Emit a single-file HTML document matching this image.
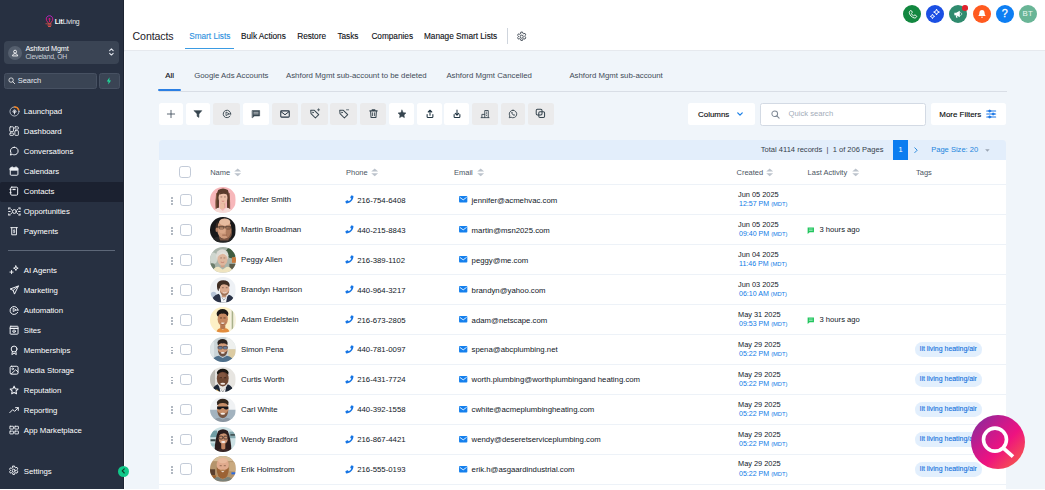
<!DOCTYPE html>
<html lang="en">
<head>
<meta charset="utf-8">
<title>Contacts</title>
<style>
*{box-sizing:border-box;margin:0;padding:0}
html,body{width:1045px;height:490px;overflow:hidden;background:#fff}
body{font-family:"Liberation Sans",Arial,sans-serif;color:#1f2733;position:relative;font-size:8px}
svg{display:block;overflow:visible}
.abs{position:absolute}
/* ---------- sidebar ---------- */
#side{position:absolute;left:0;top:0;width:123.700px;height:488.600px;background:#273041;color:#fff}
#logo{position:absolute;left:0;top:14px;width:124px;height:16px}
#logo .t{position:absolute;left:54.800px;top:3.700px;font-size:6.800px;letter-spacing:-.16px;color:#e9ecf2;white-space:nowrap}
#logo .t b{font-weight:700;color:#fff}
#acct{position:absolute;left:4.2px;top:41px;width:115px;height:23px;border-radius:4px;background:#3a4454}
#acct .av{position:absolute;left:4px;top:4.5px;width:14.2px;height:14.2px;border-radius:50%;background:#555f6e}
#acct .n1{position:absolute;left:21.2px;top:3.2px;font-size:7.3px;letter-spacing:-.19px;color:#fff;white-space:nowrap}
#acct .n2{position:absolute;left:21.2px;top:12.2px;font-size:6.8px;letter-spacing:-.2px;color:#c8ced8;white-space:nowrap}
#srch{position:absolute;left:4.2px;top:73px;width:93.2px;height:15.6px;border-radius:2.5px;background:#3a4454;border:.5px solid #475162}
#srch span{position:absolute;left:12.500px;top:2px;font-size:7.500px;letter-spacing:-.05px;color:#e3e7ee}
#bolt{position:absolute;left:98.5px;top:73px;width:21.200px;height:15.6px;border-radius:2.5px;background:#3a4454;border:.5px solid #475162}
.nav{position:absolute;left:0;width:123.7px;height:20px}
.nav.sel{background:#1b2130;border-radius:2px 0 0 2px;top:182.200px!important;height:19.400px}
.nav.sel span{top:5.050px}.nav.sel svg{top:4.150px}
.nav span{position:absolute;left:23.800px;top:5.250px;font-size:7.800px;color:#fff;white-space:nowrap;letter-spacing:-.03px}
.nav svg{position:absolute;left:9px;top:4.350px;width:10.200px;height:10.200px;fill:none;stroke:#f2f4f8;stroke-width:1.550;stroke-linecap:round;stroke-linejoin:round}
#sdiv{position:absolute;left:8px;top:249.6px;width:107px;height:1.2px;background:#5d6778}
#collapse{z-index:5;position:absolute;left:117.900px;top:466px;width:11.200px;height:11.200px;border-radius:50%;background:#10c98a}
/* ---------- header ---------- */
#hdr{position:absolute;left:123.7px;top:0;width:922px;height:50.6px;background:#fff;border-bottom:1px solid #e6e9ee}
#title{position:absolute;left:132.6px;top:29.6px;font-size:10.6px;color:#1b2029;letter-spacing:-.12px;white-space:nowrap}
.tab{position:absolute;top:32.300px;font-size:8.270px;letter-spacing:-.02px;color:#0c0f14;-webkit-text-stroke:.1px #0c0f14;white-space:nowrap}
.tab.on{color:#2b8fe0;-webkit-text-stroke:.1px #2b8fe0}
#tabline{position:absolute;left:185.300px;top:47.800px;width:48.600px;height:1.600px;background:#3a9be3}
#vsep{position:absolute;left:506.800px;top:28px;width:1px;height:16px;background:#cfd5dd}
.circ{position:absolute;top:5.050px;width:18.4px;height:18.4px;border-radius:50%}
.circ svg{position:absolute;left:4.2px;top:4.2px;width:10px;height:10px}
/* ---------- body ---------- */
#main{position:absolute;left:123.7px;top:51.4px;width:922px;height:437.2px;background:#f0f5fa}
.stab{position:absolute;top:70.800px;font-size:7.820px;color:#414b57;white-space:nowrap}
#sline{position:absolute;left:159px;top:90.8px;width:848px;height:.9px;background:#d9dee6}
#sall{position:absolute;left:158.300px;top:88.900px;width:22.800px;height:2.200px;background:#2b7fe3;border-radius:1px}
.tb{position:absolute;top:103px;height:21.8px;border-radius:2.5px;background:#fff}
.tb.d{background:#ebebec}
.tb svg{position:absolute;left:50%;top:50%;width:10px;height:10px;margin:-5px 0 0 -5px;fill:none;stroke:#36454f;stroke-width:1.8;stroke-linecap:round;stroke-linejoin:round}
#cols{position:absolute;left:687.6px;top:102.8px;width:67.6px;height:22.6px;border-radius:2.5px;background:#fff}
#cols span{position:absolute;left:10.400px;top:7.500px;font-size:7.950px;color:#05070a;-webkit-text-stroke:.12px #05070a}
#qs{position:absolute;left:760.400px;top:102.800px;width:165.600px;height:23.100px;border-radius:2.5px;background:#fff;border:.8px solid #d3dae4}
#qs span{position:absolute;left:27.200px;top:5.700px;font-size:7.650px;color:#a3acb9}
#mf{position:absolute;left:931.100px;top:102.8px;width:75px;height:22.6px;border-radius:2.5px;background:#fff}
#mf span{position:absolute;left:8.200px;top:7.300px;font-size:7.950px;color:#05070a;-webkit-text-stroke:.12px #05070a;white-space:nowrap}
/* ---------- pager ---------- */
#pg{position:absolute;left:159px;top:139.6px;width:847.4px;height:20.8px;background:#e3eefb;border-radius:3.5px 3.5px 0 0}
#pg .txt{position:absolute;left:601.800px;top:5.700px;font-size:7.550px;color:#353f4c;white-space:nowrap}
#pg .one{position:absolute;left:733.900px;top:0;width:15.200px;height:20.8px;background:#0c7df0;color:#fff;font-size:7.4px;text-align:center;line-height:20.8px}
#pg .ps{position:absolute;left:772.200px;top:5.700px;font-size:7.550px;color:#2386dd;white-space:nowrap}
/* ---------- table ---------- */
#tbl{position:absolute;left:159px;top:160.4px;width:847.4px;height:328.2px;background:#fff;overflow:hidden}
.th{position:absolute;top:7.600px;font-size:7.500px;color:#4b5563;white-space:nowrap}
.row{position:absolute;left:0;width:847.400px;height:30px;border-top:1px solid #edf2f8}
.row .dots{position:absolute;left:12.300px;top:11.600px;width:2.400px;height:9px}
.row .dots i{position:absolute;left:0;width:1.800px;height:1.800px;border-radius:50%;background:#9aa3af}
.cb{position:absolute;left:21.100px;width:11.600px;height:11.600px;border:.9px solid #c3cbd8;border-radius:2.800px;background:#fff}
.row .cb{top:8.700px}
.row.last>*{margin-top:-.5px}
.row.u4>*{margin-top:-.4px}.row.u5>*{margin-top:-.55px}
.row.last>.d1,.row.last>.d2,.row.last>.tag,.row.u4>.d1,.row.u4>.d2,.row.u4>.tag,.row.u5>.d1,.row.u5>.d2,.row.u5>.tag{margin-top:0}
.av{position:absolute;left:51.300px;top:1.850px;width:25.500px;height:25.500px;border-radius:50%;overflow:hidden}
.nm{position:absolute;left:82px;top:10px;font-size:7.850px;color:#111827;white-space:nowrap}
.ph{position:absolute;left:198.200px;top:10.150px;font-size:7.780px;color:#111827;white-space:nowrap}
.em{position:absolute;left:312.600px;top:10.150px;font-size:7.780px;color:#111827;white-space:nowrap}
.d1{position:absolute;left:579px;top:4.400px;font-size:7.380px;color:#111827;white-space:nowrap}
.d2{position:absolute;left:580px;top:15px;font-size:7.050px;color:#0e7ae6;white-space:nowrap}
.d2 small{font-size:5.750px}
.la{position:absolute;left:660.500px;top:9.700px;font-size:7.650px;color:#111827;white-space:nowrap}
.tag{position:absolute;left:756.200px;top:7px;width:66.4px;height:14.6px;border-radius:7.3px;background:#e2effd;color:#0f70dc;-webkit-text-stroke:.1px #0f70dc;font-size:6.950px;text-align:center;line-height:14.600px;white-space:nowrap}
.pico{position:absolute;left:186.200px;top:10.100px;width:8.600px;height:8.600px}
.eico{position:absolute;left:299.800px;top:11.100px;width:8.4px;height:6.4px}
.mico{position:absolute;left:647.800px;top:11.200px;width:7.6px;height:7.2px}
#fab{position:absolute;left:971px;top:415px;width:54px;height:54px;border-radius:50%;background:linear-gradient(135deg,#8b2a9c 8%,#c71a8d 35%,#ee1280 58%,#f4445a 82%,#f9603f 100%)}
</style>
</head>
<body>
<!-- SIDEBAR -->
<div id="side">
  <div id="logo">
    <svg class="abs" style="left:45.4px;top:.6px;width:9px;height:13px" viewBox="0 0 18 26">
      <defs><linearGradient id="lg" x1="0" y1="0" x2="0" y2="1"><stop offset="0" stop-color="#c026d3"/><stop offset=".6" stop-color="#ec1181"/><stop offset="1" stop-color="#f9603f"/></linearGradient></defs>
      <path d="M9 1.5c4 0 6.5 3 6.5 6.6 0 2.600-1.400 4.300-2.700 5.800-.9 1-1.300 2.200-1.300 3.600h-5c0-1.400-.4-2.600-1.300-3.600C3.900 12.400 2.500 10.700 2.500 8.100 2.500 4.500 5 1.500 9 1.500z" fill="none" stroke="url(#lg)" stroke-width="1.8"/>
      <path d="M9 6.200v8M6.600 9l2.400-2.800L11.400 9" fill="none" stroke="#ec1181" stroke-width="1.500"/>
      <path d="M5.500 20h7M7 23h4" stroke="#f5524b" stroke-width="1.800" stroke-linecap="round"/>
      <path d="M1 17.500h4" stroke="#f5524b" stroke-width="1.400"/>
    </svg>
    <div class="t"><b>Lit</b>Living</div>
  </div>
  <div id="acct">
    <div class="av"><svg viewBox="0 0 12 12" style="width:14.2px;height:14.2px"><circle cx="6" cy="4.800" r="1.250" fill="none" stroke="#fff" stroke-width=".75"/><path d="M3.800 8.400c.2-1.300 1-1.900 2.200-1.900s2 .6 2.200 1.900z" fill="none" stroke="#fff" stroke-width=".75" stroke-linejoin="round"/></svg></div>
    <div class="n1">Ashford Mgmt</div>
    <div class="n2">Cleveland, OH</div>
    <svg class="abs" style="left:105.200px;top:6.100px;width:4.800px;height:10px" viewBox="0 0 6 12"><path d="M.8 4.200L3 2l2.200 2.200M.8 7.600L3 9.800l2.200-2.200" fill="none" stroke="#e3e7ee" stroke-width="1.350" stroke-linecap="round" stroke-linejoin="round"/></svg>
  </div>
  <div id="srch">
    <svg class="abs" style="left:2.600px;top:2.700px;width:7.400px;height:7.400px" viewBox="0 0 10 10"><circle cx="4.200" cy="4.200" r="3" fill="none" stroke="#fff" stroke-width="1"/><path d="M6.500 6.500L9 9" stroke="#fff" stroke-width="1.100" stroke-linecap="round"/></svg>
    <span>Search</span>
  </div>
  <div id="bolt"><svg class="abs" style="left:6.400px;top:3.200px;width:5.800px;height:7.800px" viewBox="0 0 8 11"><path d="M5 .5L1 6.200h2.600L3 10.500l4-5.700H4.400z" fill="#1fdc9b"/></svg></div>

  <div class="nav" style="top:102px"><svg viewBox="0 0 16 16" style="left:8.600px;top:3.900px;width:11px;height:11px"><circle cx="8" cy="8" r="6.600" stroke="#c5ccd6" stroke-width="1.200"/><path d="M8 1.400a6.600 6.600 0 0 1 6.200 4.300" stroke="#f5821f" stroke-width="1.900"/><path d="M8 11.500V7M5.700 8.300c0-1.500 1-2.600 2.300-2.600s2.300 1.100 2.300 2.600z" stroke-width="1.300"/></svg><span>Launchpad</span></div>
  <div class="nav" style="top:122px"><svg viewBox="0 0 16 16"><g stroke-width="1.350"><rect x="1.300" y="1.300" width="5.700" height="7.400" rx=".8"/><rect x="9.200" y="1.300" width="5.500" height="3.600" rx=".8"/><rect x="1.300" y="11" width="5.700" height="3.700" rx=".8"/><rect x="9.200" y="7.300" width="5.500" height="7.400" rx=".8"/></g></svg><span>Dashboard</span></div>
  <div class="nav" style="top:142px"><svg viewBox="0 0 16 16"><path d="M8.300 2C4.800 2 2.300 4.500 2.300 7.700c0 1.300.4 2.400 1 3.300L2 14.200l3.500-1c.8.400 1.800.6 2.800.6 3.500 0 6-2.500 6-5.900C14.300 4.500 11.800 2 8.300 2z"/></svg><span>Conversations</span></div>
  <div class="nav" style="top:162px"><svg viewBox="0 0 16 16"><rect x="2" y="3" width="12" height="11.500" rx="1.500"/><path d="M2.300 3.300h11.400v3.200H2.300z" fill="#f1f4f8"/><path d="M5 1.300v2M11 1.300v2"/></svg><span>Calendars</span></div>
  <div class="nav sel" style="top:182px"><svg viewBox="0 0 16 16"><rect x="2.600" y="1.800" width="11" height="12.600" rx="1.800"/><path d="M5.400 5.400h5" stroke-width="2.100" stroke-linecap="butt"/><path d="M1.400 5.200h1.800M1.400 10.500h1.800" stroke-width="1.400"/></svg><span>Contacts</span></div>
  <div class="nav" style="top:202px"><svg viewBox="0 0 20 14" style="left:8.400px;top:5.400px;width:12.800px;height:9px"><circle cx="10" cy="7" r="3" stroke-width="1.500"/><path d="M1.200 1.600h2.200M1.200 1.600v1.800M18.800 1.600h-2.200M18.800 1.600v1.800M1.200 12.400h2.200M1.200 12.400v-1.800M18.800 12.400h-2.200M18.800 12.400v-1.800M4.400 3.400l1.800 1.400M15.600 3.400l-1.800 1.400M4.400 10.600l1.800-1.400M15.600 10.600l-1.800-1.400M1 7h2.400M16.600 7H19" stroke-width="1.500"/></svg><span>Opportunities</span></div>
  <div class="nav" style="top:222px"><svg viewBox="0 0 16 16"><path d="M4.300 2.800v11h7.400v-11M2.800 2.600h10.400" stroke-width="1.500"/><path d="M8 5.600v5.400M9.300 6.900c-.5-.6-2.500-.6-2.500.5 0 1.300 2.600.6 2.600 1.900 0 1.100-2.200 1.100-2.800.4" stroke-width="1"/></svg><span>Payments</span></div>
  <div id="sdiv"></div>
  <div class="nav" style="top:260.8px"><svg viewBox="0 0 16 16"><path d="M10.800 1.400l1 2.600 2.600 1-2.600 1-1 2.600-1-2.600-2.600-1 2.600-1z" stroke-width="1.500"/><path d="M4 8.600v5M1.500 11.100h5" stroke-width="1.500"/></svg><span>AI Agents</span></div>
  <div class="nav" style="top:280.8px"><svg viewBox="0 0 16 16"><path d="M14.300 1.700L1.800 6.300l4.800 2.200 1.800 5.200z"/><path d="M14.300 1.700L6.600 8.500" stroke-width="1.400"/></svg><span>Marketing</span></div>
  <div class="nav" style="top:300.8px"><svg viewBox="0 0 16 16"><path d="M13.600 11.600A6.300 6.300 0 1 1 14.300 8" /><path d="M6.600 5.600v4.800l4-2.400z" stroke-width="1.400"/><path d="M10.600 8h3.700" stroke-width="1.400"/></svg><span>Automation</span></div>
  <div class="nav" style="top:320.8px"><svg viewBox="0 0 16 16"><rect x="1.800" y="2" width="12.400" height="12.400" rx="1"/><path d="M2 5.200h12" stroke-width="1.800"/><circle cx="8" cy="9.800" r="2.100" stroke-width="1.200"/><path d="M5.900 9.800h4.200" stroke-width="1"/></svg><span>Sites</span></div>
  <div class="nav" style="top:340.8px"><svg viewBox="0 0 16 16"><circle cx="8" cy="6.300" r="4.600"/><path d="M5.300 10.200L4.500 15 8 13l3.500 2-.8-4.800"/></svg><span>Memberships</span></div>
  <div class="nav" style="top:360.8px"><svg viewBox="0 0 16 16"><rect x="1.800" y="2" width="12.400" height="12.400" rx="2"/><circle cx="5.800" cy="6" r="1.300" stroke-width="1.300"/><path d="M3.500 14l7-6.500 3.700 3.500" stroke-width="1.500"/></svg><span>Media Storage</span></div>
  <div class="nav" style="top:380.8px"><svg viewBox="0 0 16 16"><path d="M8 1.800l1.900 4 4.300.6-3.100 3 .7 4.300L8 11.700l-3.800 2 .7-4.300-3.100-3 4.300-.6z" stroke-width="1.600"/></svg><span>Reputation</span></div>
  <div class="nav" style="top:400.8px"><svg viewBox="0 0 16 16"><path d="M1.200 12l4.800-4.800 2.800 2.800 5.700-5.700M10.300 4.200h4.300v4.300"/></svg><span>Reporting</span></div>
  <div class="nav" style="top:420.8px"><svg viewBox="0 0 16 16"><g stroke-linejoin="miter" stroke-width="1.400"><rect x="1.400" y="2" width="5.600" height="4.400" rx=".5"/><rect x="9.200" y="2" width="5.600" height="4.400" rx=".5"/><rect x="1.400" y="9.600" width="5.600" height="4.400" rx=".5"/><rect x="9.200" y="9.600" width="5.600" height="4.400" rx=".5"/></g></svg><span>App Marketplace</span></div>
  <div class="nav" style="top:461.700px"><svg viewBox="0 0 16 16" style="left:8.400px;top:3.800px;width:11.400px;height:11.400px"><circle cx="8" cy="8" r="2.100" stroke-width="1.400"/><path d="M6.800 1.500h2.400l.4 1.700 1.300.7 1.700-.6 1.200 2.100-1.300 1.200v1.500l1.300 1.200-1.200 2.100-1.700-.6-1.300.7-.4 1.700H6.800l-.4-1.700-1.300-.7-1.700.6-1.200-2.100 1.300-1.200V7.300L2.200 6.100l1.200-2.100 1.700.6 1.300-.7z" stroke-width="1.400"/></svg><span>Settings</span></div>
</div>
<div class="abs" style="left:122.700px;top:0;width:1px;height:488.600px;background:#1d2432;z-index:3"></div><div class="abs" style="left:123.700px;top:51.600px;width:1px;height:437px;background:#fbfcfe;z-index:3"></div>
<div id="collapse"><svg class="abs" style="left:2.800px;top:2.400px;width:4.400px;height:5.800px" viewBox="0 0 5 7"><path d="M3.800 1L1.300 3.500 3.800 6" fill="none" stroke="#0f3d2a" stroke-width="1.400" stroke-linecap="round" stroke-linejoin="round"/></svg></div>

<!-- HEADER -->
<div id="hdr"></div>
<div id="title">Contacts</div>
<div class="tab on" style="left:189.200px">Smart Lists</div>
<div class="tab" style="left:241px">Bulk Actions</div>
<div class="tab" style="left:297.200px">Restore</div>
<div class="tab" style="left:337.400px">Tasks</div>
<div class="tab" style="left:371.400px">Companies</div>
<div class="tab" style="left:424px">Manage Smart Lists</div>
<div id="tabline"></div>
<div id="vsep"></div>
<svg class="abs" style="left:516.400px;top:30.500px;width:11.400px;height:11.400px" viewBox="0 0 16 16" fill="none" stroke="#3f4853" stroke-width="1.300" stroke-linejoin="round"><circle cx="8" cy="8" r="2.200"/><path d="M6.800 1.500h2.400l.4 1.700 1.300.7 1.700-.6 1.200 2.100-1.300 1.200v1.500l1.300 1.200-1.200 2.100-1.700-.6-1.300.7-.4 1.700H6.800l-.4-1.700-1.300-.7-1.700.6-1.200-2.100 1.300-1.200V7.300L2.200 6.100l1.200-2.100 1.700.6 1.300-.7z"/></svg>

<div class="circ" style="left:902.900px;background:#12873f"><svg viewBox="0 0 12 12" style="left:3.700px;top:3.700px;width:11px;height:11px"><path d="M3.600 1.800c.5-.4 1.200-.2 1.500.4l.5 1c.2.500.1 1-.3 1.300l-.5.500c.4 1.100 1.300 2 2.400 2.500l.5-.5c.3-.4.900-.5 1.300-.3l1 .5c.6.300.8 1 .4 1.500-.6.900-1.700 1.300-2.700 1C5.300 9 3.300 7 2.600 4.600c-.3-1 .1-2.100 1-2.800z" fill="none" stroke="#fff" stroke-width="1"/></svg></div>
<div class="circ" style="left:925.600px;background:#1b4fe3"><svg viewBox="0 0 12 12" style="left:3.400px;top:3.400px;width:11.600px;height:11.600px"><path d="M7.800 1.200l.9 2.100 2.100.9-2.100.9-.9 2.100-.9-2.100-2.100-.9 2.100-.9z" fill="none" stroke="#fff" stroke-width="1" stroke-linejoin="round"/><path d="M3.600 6.400l.7 1.600 1.600.7-1.600.7-.7 1.600-.7-1.600L1.300 8.700l1.600-.7z" fill="none" stroke="#fff" stroke-width=".9" stroke-linejoin="round"/></svg></div>
<div class="circ" style="left:948.700px;background:#2f8b6e"><svg viewBox="0 0 12 12"><path d="M1.600 4.600h2.200l4.400-2.400v7.600L3.800 7.400H1.600z" fill="#fff"/><path d="M3.200 7.400l.7 3h1.500l-.6-3z" fill="#fff"/><path d="M9.400 4.300c.7.400 1 1 1 1.700s-.3 1.300-1 1.700" fill="none" stroke="#fff" stroke-width=".9" stroke-linecap="round"/></svg></div>
<div class="abs" style="left:962.400px;top:5px;width:5.600px;height:5.600px;border-radius:50%;background:#e0222c"></div>
<div class="circ" style="left:972.500px;background:#ff5a1f"><svg viewBox="0 0 12 12"><path d="M6 1.200c2 0 3.100 1.500 3.100 3.400 0 2.400 1 3.400 1.400 3.900H1.500c.4-.5 1.400-1.500 1.400-3.900C2.900 2.700 4 1.200 6 1.200z" fill="#fff"/><path d="M4.800 9.400c.2.800.6 1.300 1.200 1.300s1-.5 1.200-1.300z" fill="#fff"/></svg></div>
<div class="circ" style="left:995.600px;background:#0d7ef3"><div class="abs" style="left:0;top:2.400px;width:18.400px;text-align:center;font-size:10.800px;font-weight:400;-webkit-text-stroke:.28px #fff;color:#fff;line-height:13px">?</div></div>
<div class="circ" style="left:1018.500px;background:#69b596"><div class="abs" style="left:0;top:4.200px;width:18.400px;text-align:center;font-size:7.800px;color:#eaf7f1;line-height:10px;letter-spacing:.1px">BT</div></div>

<!-- BODY -->
<div id="main"></div>
<div class="stab" style="left:165.200px;color:#0d1117;-webkit-text-stroke:.15px #0d1117">All</div>
<div class="stab" style="left:194.200px">Google Ads Accounts</div>
<div class="stab" style="left:286px">Ashford Mgmt sub-account to be deleted</div>
<div class="stab" style="left:446.400px">Ashford Mgmt Cancelled</div>
<div class="stab" style="left:569.400px">Ashford Mgmt sub-account</div>
<div id="sline"></div><div id="sall"></div>

<!-- toolbar -->
<div class="tb" style="left:159px;width:23.800px"><svg viewBox="0 0 16 16"><path d="M8 2.200v11.600M2.200 8h11.600" stroke-width="1.250" stroke="#2f3f4d"/></svg></div>
<div class="tb" style="left:185.800px;width:23.900px"><svg viewBox="0 0 16 16"><path d="M2 2.600h12L9.400 8v5.400L6.600 11.600V8z" fill="#36454f" stroke-width="1"/></svg></div>
<div class="tb d" style="left:213px;width:27.400px"><svg viewBox="0 0 16 16"><path d="M13 11.300A6 6 0 1 1 14 8" stroke-width="1.500"/><path d="M6.400 5.400v5.200l4.400-2.600z" stroke-width="1.300"/><path d="M10.800 8H14" stroke-width="1.300"/></svg></div>
<div class="tb" style="left:243.400px;width:25.600px"><svg viewBox="0 0 16 16"><path d="M2.200 2.400h11.600v8.800H5.600L2.200 14z" fill="#36454f" stroke-width=".8"/><path d="M4.600 5.200h6.800M4.600 7.800h6.800" stroke="#fff" stroke-width="1"/></svg></div>
<div class="tb d" style="left:272px;width:26.100px"><svg viewBox="0 0 16 16"><rect x="1.200" y="3" width="13.600" height="10" rx="1.300" stroke-width="1.700" stroke="#243342"/><path d="M1.800 4.400L8 9.200l6.200-4.800" stroke-width="1.600" stroke="#243342"/></svg></div>
<div class="tb d" style="left:301px;width:26.600px"><svg viewBox="0 0 16 16" style="width:11.600px;height:11.600px;margin:-6px 0 0 -5.600px"><path d="M2.400 3.200h5l6 6-4.600 4.600-6-6z" stroke-width="1.400"/><circle cx="5.400" cy="6.200" r=".7" stroke-width="1"/><path d="M13.200 1v3M11.700 2.500h3" stroke-width="1"/></svg></div>
<div class="tb d" style="left:330px;width:27px"><svg viewBox="0 0 16 16" style="width:11.600px;height:11.600px;margin:-6px 0 0 -5.600px"><path d="M2.400 3.200h5l6 6-4.600 4.600-6-6z" stroke-width="1.400"/><circle cx="5.400" cy="6.200" r=".7" stroke-width="1"/><path d="M11.700 2.500h3" stroke-width="1"/></svg></div>
<div class="tb d" style="left:360px;width:26.200px"><svg viewBox="0 0 16 16" style="width:11px;height:11px;margin:-5.600px 0 0 -5.500px"><path d="M2.600 4.200h10.800M6 4V2.400h4V4M3.800 4.400l.6 9.400h7.200l.6-9.400" stroke-width="1.500"/><path d="M6.600 7v4.200M9.400 7v4.200" stroke-width="1.200"/></svg></div>
<div class="tb" style="left:389px;width:25.200px"><svg viewBox="0 0 16 16"><path d="M8 1.800l1.900 4 4.300.6-3.100 3 .7 4.300L8 11.700l-3.800 2 .7-4.300-3.100-3 4.300-.6z" fill="#36454f" stroke-width="1"/></svg></div>
<div class="tb" style="left:417.200px;width:24.800px"><svg viewBox="0 0 16 16"><g stroke="#1f3340"><path d="M8 10V2M5.200 4.800L8 2l2.800 2.800" stroke-width="1.700"/><path d="M3.400 8.800v3.400c0 .8.600 1.400 1.400 1.400h6.400c.8 0 1.400-.6 1.400-1.400V8.800" stroke-width="1.700"/></g></svg></div>
<div class="tb" style="left:444.400px;width:24.600px"><svg viewBox="0 0 16 16"><g stroke="#1f3340"><path d="M8 1.800v8M5.200 7L8 9.800 10.800 7" stroke-width="1.700"/><path d="M3.400 8.800v3.400c0 .8.600 1.400 1.400 1.400h6.400c.8 0 1.400-.6 1.400-1.400V8.800" stroke-width="1.700"/></g></svg></div>
<div class="tb d" style="left:472px;width:26.200px"><svg viewBox="0 0 16 16"><path d="M7.600 13.800V2.400h5.600v11.400M3 13.800V8.600h4.600M1.800 13.800h12.600" stroke-width="1.400"/><path d="M10.400 5v.1M10.400 7.600v.1M10.400 10.200v.1" stroke-width="1.500"/></svg></div>
<div class="tb d" style="left:501px;width:23.900px"><svg viewBox="0 0 16 16"><path d="M8 2a6 6 0 0 0-5.100 9.100L2 14l3-.8A6 6 0 1 0 8 2z" stroke-width="1.400"/><path d="M5.800 5.200c.3-.3.800-.3 1 .1l.4.800c.1.300 0 .6-.2.800l-.3.300c.4.900 1.100 1.600 2 2l.3-.3c.2-.2.500-.3.800-.2l.8.400c.4.200.4.700.1 1-1.200 1.200-5.800-2.300-4.900-4.900z" fill="#36454f" stroke-width=".4"/></svg></div>
<div class="tb d" style="left:528px;width:25.600px"><svg viewBox="0 0 16 16" style="width:10.800px;height:10.800px;margin:-5.600px 0 0 -5.400px"><rect x="1.800" y="1.800" width="8.600" height="8.600" rx="1.800" stroke-width="1.500"/><rect x="5.600" y="5.600" width="8.600" height="8.600" rx="1.800" stroke-width="1.500"/></svg></div>

<div id="cols"><span>Columns</span><svg class="abs" style="left:49.200px;top:9.400px;width:6px;height:4px" viewBox="0 0 8 5"><path d="M1 1l3 3 3-3" fill="none" stroke="#1a7fe6" stroke-width="1.700" stroke-linecap="round" stroke-linejoin="round"/></svg></div>
<div id="qs"><svg class="abs" style="left:9.400px;top:5.800px;width:9px;height:9px" viewBox="0 0 12 12"><circle cx="5" cy="5" r="3.800" fill="none" stroke="#7f8995" stroke-width="1.350"/><path d="M7.800 7.800l3 3" stroke="#7f8995" stroke-width="1.450" stroke-linecap="round"/></svg><span>Quick search</span></div>
<div id="mf"><span>More Filters</span><svg class="abs" style="left:55.200px;top:6.400px;width:10.400px;height:10px" viewBox="0 0 14 13" fill="none" stroke="#1a76e6" stroke-width="1.500" stroke-linecap="round"><path d="M1 2.500h12M1 6.500h12M1 10.500h12"/><circle cx="5" cy="2.500" r="1.500" fill="#1a76e6" stroke-width=".8"/><circle cx="9.600" cy="6.500" r="1.500" fill="#1a76e6" stroke-width=".8"/><circle cx="5" cy="10.500" r="1.500" fill="#1a76e6" stroke-width=".8"/></svg></div>

<!-- pager -->
<div id="pg">
  <div class="txt">Total 4114 records &nbsp;|&nbsp; 1 of 206 Pages</div>
  <div class="one">1</div>
  <svg class="abs" style="left:755.400px;top:7.200px;width:4px;height:6.400px" viewBox="0 0 5 8"><path d="M1 1l3 3-3 3" fill="none" stroke="#2386dd" stroke-width="1.200" stroke-linecap="round" stroke-linejoin="round"/></svg>
  <div class="ps">Page Size: 20</div>
  <svg class="abs" style="left:825.800px;top:9px;width:4.800px;height:3px" viewBox="0 0 6 4"><path d="M0 .4h6L3 3.800z" fill="#9aa5b3"/></svg>
</div>

<!-- TABLE -->
<div id="tbl">
<svg width="0" height="0" style="position:absolute"><defs><filter id="b1" x="-10%" y="-10%" width="120%" height="120%"><feGaussianBlur stdDeviation="1"/></filter></defs></svg>
<div class="cb" style="top:5.900px;left:20.200px"></div>
<div class="th" style="left:51.2px">Name</div><svg class="abs" style="left:74.6px;top:7.900px;width:7.400px;height:8.800px" viewBox="0 0 6 9" preserveAspectRatio="none"><path d="M.2 3.700L3 .5l2.800 3.200z" fill="#bcc3cc"/><path d="M.2 5.300L3 8.500l2.800-3.200z" fill="#bcc3cc"/></svg>
<div class="th" style="left:187px">Phone</div><svg class="abs" style="left:211.8px;top:7.900px;width:7.400px;height:8.800px" viewBox="0 0 6 9" preserveAspectRatio="none"><path d="M.2 3.700L3 .5l2.800 3.200z" fill="#bcc3cc"/><path d="M.2 5.300L3 8.500l2.800-3.200z" fill="#bcc3cc"/></svg>
<div class="th" style="left:295px">Email</div><svg class="abs" style="left:317.6px;top:7.900px;width:7.400px;height:8.800px" viewBox="0 0 6 9" preserveAspectRatio="none"><path d="M.2 3.700L3 .5l2.800 3.200z" fill="#bcc3cc"/><path d="M.2 5.300L3 8.500l2.800-3.200z" fill="#bcc3cc"/></svg>
<div class="th" style="left:577.500px">Created</div><svg class="abs" style="left:607.4px;top:7.900px;width:7.400px;height:8.800px" viewBox="0 0 6 9" preserveAspectRatio="none"><path d="M.2 3.700L3 .5l2.800 3.200z" fill="#bcc3cc"/><path d="M.2 5.300L3 8.500l2.800-3.200z" fill="#bcc3cc"/></svg>
<div class="th" style="left:648.6px">Last Activity</div><svg class="abs" style="left:692.8px;top:7.900px;width:7.400px;height:8.800px" viewBox="0 0 6 9" preserveAspectRatio="none"><path d="M.2 3.700L3 .5l2.800 3.200z" fill="#bcc3cc"/><path d="M.2 5.300L3 8.500l2.800-3.200z" fill="#bcc3cc"/></svg>
<div class="th" style="left:757px">Tags</div>
<div class="row" style="top:24.0px"><div class="dots"><i style="top:0"></i><i style="top:2.950px"></i><i style="top:5.900px"></i></div><div class="cb"></div><div class="av"><svg viewBox="0 0 50 50" style="width:25.500px;height:25.500px"><rect width="50" height="50" fill="#f7b7ba"/><g filter="url(#b1)"><path d="M16 6Q25.500 0 35 6Q40 18 39.500 43L33.500 45L33 14L18 14L17.500 45L11.500 43Q10 18 16 6Z" fill="#5a3a2c"/><path d="M13 12Q11 28 12 42" stroke="#8a5b42" stroke-width="2" fill="none"/><path d="M37.500 12Q39 28 38 42" stroke="#7a4d38" stroke-width="2" fill="none"/><rect x="21" y="29" width="9" height="12" fill="#dba88f"/><ellipse cx="25.500" cy="21" rx="8.800" ry="11.800" fill="#ecc0a8"/><path d="M18 15Q20 8 26 8Q32 8 33.500 15Q28 11 18 15Z" fill="#5a3a2c"/><path d="M20.500 19.500h3.500M27.500 19.500h3.500" stroke="#5a3a30" stroke-width="1"/><path d="M23 27.500q2.500 1.500 5 0" stroke="#c96a6a" stroke-width="1.300" fill="none"/><path d="M7 50Q11 40 19 41L25 47L31 41Q40 40 44 50Z" fill="#f6dcd7"/><ellipse cx="23.500" cy="38" rx="4.500" ry="6" fill="#ebbda4"/></g></svg></div><div class="nm">Jennifer Smith</div><svg class="pico" viewBox="0 0 12 12"><path d="M11.300 1.200L9 .6c-.3-.1-.6.1-.7.400L7.400 3.400c-.1.300 0 .6.200.8l1.300 1c-.8 1.600-2.100 2.900-3.700 3.700l-1-1.300c-.2-.2-.5-.3-.8-.2L1 8.300c-.3.100-.5.400-.4.700l.6 2.300c.1.300.3.500.6.500C7 11.800 11.800 7 11.800 1.800c0-.3-.2-.5-.5-.6z" fill="#1474e4"/></svg><div class="ph">216-754-6408</div><svg class="eico" viewBox="0 0 13 10"><rect x="0" y="0" width="13" height="10" rx="1.400" fill="#1480ee"/><path d="M1.200 2.200L6.500 6l5.300-3.800" fill="none" stroke="#fff" stroke-width="1.300"/></svg><div class="em">jennifer@acmehvac.com</div><div class="d1">Jun 05 2025</div><div class="d2">12:57 PM <small>(MDT)</small></div></div>
<div class="row" style="top:54.0px"><div class="dots"><i style="top:0"></i><i style="top:2.950px"></i><i style="top:5.900px"></i></div><div class="cb"></div><div class="av"><svg viewBox="0 0 50 50" style="width:25.500px;height:25.500px"><rect width="50" height="50" fill="#18181a"/><g filter="url(#b1)"><path d="M2 50Q6 40 16 38L40 40Q47 43 49 50Z" fill="#262527"/><ellipse cx="28" cy="23.500" rx="14" ry="20" fill="#cf9b7c"/><ellipse cx="29" cy="10" rx="11" ry="7" fill="#e6bb9f"/><path d="M15 8Q9 16 11 30Q14 26 15 18Z" fill="#3a2a22"/><ellipse cx="13.500" cy="25" rx="2.500" ry="4.500" fill="#b98468"/><ellipse cx="37" cy="31" rx="6" ry="11" fill="#a06c50" opacity=".7"/><ellipse cx="24" cy="27" rx="6" ry="5" fill="#dca98a" opacity=".8"/><path d="M13 19.500H42" stroke="#3a2820" stroke-width="1.500"/><rect x="18" y="18" width="9" height="5.500" rx="1.500" fill="none" stroke="#4a3428" stroke-width="1.200"/><rect x="31" y="18" width="9" height="5.500" rx="1.500" fill="none" stroke="#4a3428" stroke-width="1.200"/><path d="M24 35.500h9" stroke="#8a5540" stroke-width="1.400"/><path d="M17 38Q26 46 38 39L36 46L20 46Z" fill="#8f5f48" opacity=".8"/></g></svg></div><div class="nm">Martin Broadman</div><svg class="pico" viewBox="0 0 12 12"><path d="M11.300 1.200L9 .6c-.3-.1-.6.1-.7.400L7.400 3.400c-.1.300 0 .6.200.8l1.300 1c-.8 1.600-2.100 2.900-3.700 3.700l-1-1.300c-.2-.2-.5-.3-.8-.2L1 8.300c-.3.100-.5.400-.4.700l.6 2.300c.1.300.3.500.6.500C7 11.800 11.800 7 11.800 1.800c0-.3-.2-.5-.5-.6z" fill="#1474e4"/></svg><div class="ph">440-215-8843</div><svg class="eico" viewBox="0 0 13 10"><rect x="0" y="0" width="13" height="10" rx="1.400" fill="#1480ee"/><path d="M1.200 2.200L6.500 6l5.300-3.800" fill="none" stroke="#fff" stroke-width="1.300"/></svg><div class="em">martin@msn2025.com</div><div class="d1">Jun 05 2025</div><div class="d2">09:40 PM <small>(MDT)</small></div><svg class="mico" viewBox="0 0 10 10"><path d="M.6.600h8.800v6.800H3.400L.6 9.600z" fill="#22c55e"/><path d="M2.400 2.800h5.200M2.400 4.800h5.200" stroke="#d9fbe6" stroke-width=".8"/></svg><div class="la">3 hours ago</div></div>
<div class="row" style="top:84.0px"><div class="dots"><i style="top:0"></i><i style="top:2.950px"></i><i style="top:5.900px"></i></div><div class="cb"></div><div class="av"><svg viewBox="0 0 50 50" style="width:25.500px;height:25.500px"><rect width="50" height="50" fill="#a9b4aa"/><g filter="url(#b1)"><ellipse cx="7" cy="22" rx="8" ry="11" fill="#cfd6cf"/><ellipse cx="42" cy="11" rx="11" ry="11" fill="#3f5c40"/><rect x="43" y="20" width="8" height="11" fill="#c97a3c"/><rect x="38" y="33" width="13" height="12" fill="#5b5b49"/><ellipse cx="4" cy="38" rx="6" ry="6" fill="#6c7d6c"/><ellipse cx="24" cy="17" rx="12.500" ry="12.500" fill="#dddbd5"/><rect x="21" y="31" width="7.500" height="9" fill="#cf9f84"/><ellipse cx="24.500" cy="24" rx="9.800" ry="12.300" fill="#deb69d"/><path d="M15.500 19Q18 10 25 10.500Q32 11 33.500 19Q29 13 24 13.500Q19 14 15.500 19Z" fill="#e3e1db"/><path d="M20 21.500h3.500M26.500 21.500h3.500" stroke="#6a4a3c" stroke-width="1"/><path d="M21 29.500q3.500 2 7 0" stroke="#b56a5a" stroke-width="1.200" fill="none"/><path d="M4 50Q7 38 18 39L25 44L32 39Q42 38 46 50Z" fill="#efe4c0"/></g></svg></div><div class="nm">Peggy Allen</div><svg class="pico" viewBox="0 0 12 12"><path d="M11.300 1.200L9 .6c-.3-.1-.6.1-.7.400L7.400 3.400c-.1.300 0 .6.200.8l1.300 1c-.8 1.600-2.100 2.900-3.700 3.700l-1-1.300c-.2-.2-.5-.3-.8-.2L1 8.300c-.3.100-.5.400-.4.700l.6 2.300c.1.300.3.500.6.500C7 11.800 11.800 7 11.800 1.800c0-.3-.2-.5-.5-.6z" fill="#1474e4"/></svg><div class="ph">216-389-1102</div><svg class="eico" viewBox="0 0 13 10"><rect x="0" y="0" width="13" height="10" rx="1.400" fill="#1480ee"/><path d="M1.200 2.200L6.500 6l5.300-3.800" fill="none" stroke="#fff" stroke-width="1.300"/></svg><div class="em">peggy@me.com</div><div class="d1">Jun 04 2025</div><div class="d2">11:46 PM <small>(MDT)</small></div></div>
<div class="row" style="top:114.0px"><div class="dots"><i style="top:0"></i><i style="top:2.950px"></i><i style="top:5.900px"></i></div><div class="cb"></div><div class="av"><svg viewBox="0 0 50 50" style="width:25.500px;height:25.500px"><rect width="50" height="50" fill="#eef1f5"/><g filter="url(#b1)"><ellipse cx="7" cy="36" rx="6" ry="7" fill="#a9b9d0" opacity=".8"/><ellipse cx="26" cy="15.500" rx="12.300" ry="9.300" fill="#3f2d23"/><path d="M14 15Q13 24 17 28L18 16Z" fill="#3f2d23"/><rect x="23" y="32" width="9" height="8" fill="#c9987c"/><ellipse cx="28.500" cy="24" rx="9.500" ry="12" fill="#dcab8f"/><path d="M17 13Q24 6 35 10Q39 14 38 19Q32 12 22 15Q19 17 18.500 21Z" fill="#3f2d23"/><path d="M19.500 26Q21 37 29 37Q36 36 38 26Q34 33 28.500 33Q23 33 19.500 26Z" fill="#9c7259"/><path d="M25.500 30.500q3.500 1.500 7-.5" stroke="#f3e6de" stroke-width="1.400" fill="none"/><path d="M23.500 21h3.500M31 21h3.500" stroke="#4a342a" stroke-width="1"/><path d="M2 50Q4 37 17 33L27 45L37 35Q47 38 49 50Z" fill="#2a3246"/><path d="M20 35.500L27 46L34 37L31.500 50L22 50Z" fill="#f3f5f8"/></g></svg></div><div class="nm">Brandyn Harrison</div><svg class="pico" viewBox="0 0 12 12"><path d="M11.300 1.200L9 .6c-.3-.1-.6.1-.7.400L7.400 3.400c-.1.300 0 .6.200.8l1.300 1c-.8 1.600-2.100 2.900-3.700 3.700l-1-1.300c-.2-.2-.5-.3-.8-.2L1 8.300c-.3.100-.5.400-.4.700l.6 2.300c.1.300.3.500.6.500C7 11.800 11.800 7 11.800 1.800c0-.3-.2-.5-.5-.6z" fill="#1474e4"/></svg><div class="ph">440-964-3217</div><svg class="eico" viewBox="0 0 13 10"><rect x="0" y="0" width="13" height="10" rx="1.400" fill="#1480ee"/><path d="M1.200 2.200L6.500 6l5.300-3.800" fill="none" stroke="#fff" stroke-width="1.300"/></svg><div class="em">brandyn@yahoo.com</div><div class="d1">Jun 03 2025</div><div class="d2">06:10 AM <small>(MDT)</small></div></div>
<div class="row" style="top:144.0px"><div class="dots"><i style="top:0"></i><i style="top:2.950px"></i><i style="top:5.900px"></i></div><div class="cb"></div><div class="av"><svg viewBox="0 0 50 50" style="width:25.500px;height:25.500px"><rect width="50" height="50" fill="#fdf0c6"/><g filter="url(#b1)"><rect x="39" y="0" width="11" height="50" fill="#f5f1de"/><rect x="42.500" y="4" width="3" height="40" fill="#a9b18c"/><ellipse cx="24.500" cy="13" rx="11.500" ry="9" fill="#1f1a17"/><rect x="20" y="33" width="10" height="11" fill="#b67850"/><ellipse cx="25" cy="24" rx="10" ry="13" fill="#c4875e"/><path d="M14.500 17Q17 7 25 8Q33 8 35.500 17Q30 12 25 13Q20 12 14.500 17Z" fill="#1f1a17"/><path d="M19.500 21.500h4M26.500 21.500h4" stroke="#2a1c14" stroke-width="1.200"/><ellipse cx="25" cy="32" rx="4.500" ry="1.700" fill="#f6ece4"/><path d="M19 29Q25 38 31 29Q29 36 25 36.500Q21 36 19 29Z" fill="#a56a46"/><path d="M12 50Q15 41 21 41.500L25 45L29.500 41.500Q36 41 39 50Z" fill="#e28c3e"/></g></svg></div><div class="nm">Adam Erdelstein</div><svg class="pico" viewBox="0 0 12 12"><path d="M11.300 1.200L9 .6c-.3-.1-.6.1-.7.400L7.400 3.400c-.1.300 0 .6.200.8l1.300 1c-.8 1.600-2.100 2.900-3.700 3.700l-1-1.300c-.2-.2-.5-.3-.8-.2L1 8.300c-.3.100-.5.400-.4.700l.6 2.300c.1.300.3.500.6.500C7 11.800 11.800 7 11.800 1.800c0-.3-.2-.5-.5-.6z" fill="#1474e4"/></svg><div class="ph">216-673-2805</div><svg class="eico" viewBox="0 0 13 10"><rect x="0" y="0" width="13" height="10" rx="1.400" fill="#1480ee"/><path d="M1.200 2.200L6.500 6l5.300-3.800" fill="none" stroke="#fff" stroke-width="1.300"/></svg><div class="em">adam@netscape.com</div><div class="d1">May 31 2025</div><div class="d2">09:53 PM <small>(MDT)</small></div><svg class="mico" viewBox="0 0 10 10"><path d="M.6.600h8.800v6.800H3.400L.6 9.600z" fill="#22c55e"/><path d="M2.400 2.800h5.200M2.400 4.800h5.200" stroke="#d9fbe6" stroke-width=".8"/></svg><div class="la">3 hours ago</div></div>
<div class="row u4" style="top:174.0px"><div class="dots"><i style="top:0"></i><i style="top:2.950px"></i><i style="top:5.900px"></i></div><div class="cb"></div><div class="av"><svg viewBox="0 0 50 50" style="width:25.500px;height:25.500px"><rect width="50" height="50" fill="#cbd5d8"/><g filter="url(#b1)"><rect x="32" y="0" width="18" height="24" fill="#eef0ee"/><rect x="36" y="24" width="14" height="18" fill="#dccba2"/><rect x="0" y="10" width="8" height="30" fill="#dfe6e8"/><ellipse cx="24.500" cy="11.500" rx="10" ry="7.500" fill="#2a2220"/><ellipse cx="25" cy="22.500" rx="10" ry="13" fill="#d09a77"/><path d="M15 15.500Q17 7 25 7.500Q33 8 35 15.500Q30 11.500 25 12.500Q20 11.500 15 15.500Z" fill="#2a2220"/><path d="M15.500 26Q17 38 25 38.500Q33 38 34.500 26Q31 31 25 30.500Q19 31 15.500 26Z" fill="#5a4033" opacity=".85"/><rect x="16" y="18.500" width="8" height="5" rx="1.500" fill="#7d90ad" stroke="#2a2f3e" stroke-width="1"/><rect x="26" y="18.500" width="8" height="5" rx="1.500" fill="#7d90ad" stroke="#2a2f3e" stroke-width="1"/><path d="M14.500 19.500h21" stroke="#2a2f3e" stroke-width=".9"/><ellipse cx="25" cy="31" rx="4" ry="1.700" fill="#f4ece6"/><path d="M3 50Q5 39 17 37L25 41L33 37Q45 39 47 50Z" fill="#4f6f8b"/></g></svg></div><div class="nm">Simon Pena</div><svg class="pico" viewBox="0 0 12 12"><path d="M11.300 1.200L9 .6c-.3-.1-.6.1-.7.400L7.400 3.400c-.1.300 0 .6.200.8l1.300 1c-.8 1.600-2.100 2.900-3.700 3.700l-1-1.300c-.2-.2-.5-.3-.8-.2L1 8.300c-.3.100-.5.400-.4.700l.6 2.300c.1.300.3.500.6.500C7 11.800 11.800 7 11.800 1.800c0-.3-.2-.5-.5-.6z" fill="#1474e4"/></svg><div class="ph">440-781-0097</div><svg class="eico" viewBox="0 0 13 10"><rect x="0" y="0" width="13" height="10" rx="1.400" fill="#1480ee"/><path d="M1.200 2.200L6.500 6l5.300-3.800" fill="none" stroke="#fff" stroke-width="1.300"/></svg><div class="em">spena@abcplumbing.net</div><div class="d1">May 29 2025</div><div class="d2">05:22 PM <small>(MDT)</small></div><div class="tag">lit living heating/air</div></div>
<div class="row u4" style="top:204.0px"><div class="dots"><i style="top:0"></i><i style="top:2.950px"></i><i style="top:5.900px"></i></div><div class="cb"></div><div class="av"><svg viewBox="0 0 50 50" style="width:25.500px;height:25.500px"><rect width="50" height="50" fill="#e7e5e1"/><g filter="url(#b1)"><rect x="0" y="0" width="10" height="50" fill="#bdbbb5"/><ellipse cx="25" cy="11" rx="11.300" ry="7.500" fill="#1a1412"/><ellipse cx="25" cy="22.500" rx="11.600" ry="15.500" fill="#6d4633"/><ellipse cx="24" cy="17" rx="7" ry="5.500" fill="#8b5e46" opacity=".7"/><path d="M13.500 15Q15 5.500 25 5.500Q35 5.500 36.500 15Q30 9.500 25 9.500Q20 9.500 13.500 15Z" fill="#1a1412"/><path d="M19 21h4.500M27 21h4.500" stroke="#20140e" stroke-width="1.200"/><ellipse cx="25" cy="33" rx="4.800" ry="1.900" fill="#f1e8e2"/><path d="M4 50Q5 38 15 34L25 49L35 34Q45 38 46 50Z" fill="#1e2535"/><path d="M18 37L25 50L32 37L29.500 50L20.500 50Z" fill="#f0f0f0"/><path d="M13 43L20 50L11 50Z" fill="#c9a04a"/></g></svg></div><div class="nm">Curtis Worth</div><svg class="pico" viewBox="0 0 12 12"><path d="M11.300 1.200L9 .6c-.3-.1-.6.1-.7.400L7.400 3.400c-.1.300 0 .6.200.8l1.300 1c-.8 1.600-2.100 2.900-3.700 3.700l-1-1.300c-.2-.2-.5-.3-.8-.2L1 8.300c-.3.100-.5.400-.4.700l.6 2.300c.1.300.3.500.6.500C7 11.800 11.800 7 11.800 1.800c0-.3-.2-.5-.5-.6z" fill="#1474e4"/></svg><div class="ph">216-431-7724</div><svg class="eico" viewBox="0 0 13 10"><rect x="0" y="0" width="13" height="10" rx="1.400" fill="#1480ee"/><path d="M1.200 2.200L6.500 6l5.300-3.800" fill="none" stroke="#fff" stroke-width="1.300"/></svg><div class="em">worth.plumbing@worthplumbingand heating.com</div><div class="d1">May 29 2025</div><div class="d2">05:22 PM <small>(MDT)</small></div><div class="tag">lit living heating/air</div></div>
<div class="row u5" style="top:234.0px"><div class="dots"><i style="top:0"></i><i style="top:2.950px"></i><i style="top:5.900px"></i></div><div class="cb"></div><div class="av"><svg viewBox="0 0 50 50" style="width:25.500px;height:25.500px"><rect width="50" height="50" fill="#f0f2f4"/><g filter="url(#b1)"><rect x="0" y="25" width="50" height="25" fill="#a3b3bf"/><ellipse cx="25" cy="11.500" rx="11.500" ry="8" fill="#33261f"/><ellipse cx="25" cy="24" rx="11.300" ry="15" fill="#c68e69"/><path d="M13.500 16Q16 6 25 6Q34 6 36.500 16Q31 11.500 25 12Q19 11.500 13.500 16Z" fill="#33261f"/><path d="M14.500 27Q15.500 41 25 41.500Q34.500 41 35.500 27Q32 33.500 25 33Q18 33.500 14.500 27Z" fill="#6f4e3b" opacity=".9"/><path d="M14 18.500H36V23Q31 26.500 26.500 21.500H23.500Q19 26.500 14 23Z" fill="#15181d"/><ellipse cx="25" cy="33" rx="4.500" ry="1.900" fill="#f6efe9"/><path d="M5 50Q7 42 18 40.500L25 44L32 40.500Q43 42 45 50Z" fill="#8b97a2"/></g></svg></div><div class="nm">Carl White</div><svg class="pico" viewBox="0 0 12 12"><path d="M11.300 1.200L9 .6c-.3-.1-.6.1-.7.400L7.400 3.400c-.1.300 0 .6.200.8l1.300 1c-.8 1.600-2.100 2.900-3.700 3.700l-1-1.300c-.2-.2-.5-.3-.8-.2L1 8.300c-.3.100-.5.400-.4.700l.6 2.300c.1.300.3.500.6.500C7 11.800 11.800 7 11.800 1.800c0-.3-.2-.5-.5-.6z" fill="#1474e4"/></svg><div class="ph">440-392-1558</div><svg class="eico" viewBox="0 0 13 10"><rect x="0" y="0" width="13" height="10" rx="1.400" fill="#1480ee"/><path d="M1.200 2.200L6.500 6l5.300-3.800" fill="none" stroke="#fff" stroke-width="1.300"/></svg><div class="em">cwhite@acmeplumbingheating.com</div><div class="d1">May 29 2025</div><div class="d2">05:22 PM <small>(MDT)</small></div><div class="tag">lit living heating/air</div></div>
<div class="row u5" style="top:264.0px"><div class="dots"><i style="top:0"></i><i style="top:2.950px"></i><i style="top:5.900px"></i></div><div class="cb"></div><div class="av"><svg viewBox="0 0 50 50" style="width:25.500px;height:25.500px"><rect width="50" height="50" fill="#cde2e5"/><g filter="url(#b1)"><rect x="0" y="7" width="14" height="13" fill="#6f9ea5"/><rect x="1" y="24" width="10" height="4" fill="#39494a"/><rect x="38" y="9" width="12" height="13" fill="#86aab0"/><rect x="40" y="14" width="9" height="3" fill="#3b4b4c"/><rect x="0" y="32" width="10" height="6" fill="#9fc4c9"/><path d="M16 8Q25.500 1 35 8Q41 22 42 46L36 50L15 50L9 46Q10 22 16 8Z" fill="#2b1d1b"/><rect x="22" y="32" width="8" height="12" fill="#c08462"/><ellipse cx="26" cy="22" rx="9" ry="12" fill="#cb9270"/><path d="M17 17Q19 8 26 8Q33 8 35.500 17Q30 12 26 12.500Q21 12.500 17 17Z" fill="#2b1d1b"/><rect x="17.500" y="18" width="7.500" height="5.500" rx="1.800" fill="none" stroke="#231a1c" stroke-width="1.300"/><rect x="27" y="18" width="7.500" height="5.500" rx="1.800" fill="none" stroke="#231a1c" stroke-width="1.300"/><ellipse cx="26" cy="29.500" rx="4.200" ry="1.900" fill="#f5ede8"/><path d="M14 50Q16 42 22 42L26 46L30 42Q37 42 39 50Z" fill="#3a2726"/></g></svg></div><div class="nm">Wendy Bradford</div><svg class="pico" viewBox="0 0 12 12"><path d="M11.300 1.200L9 .6c-.3-.1-.6.1-.7.400L7.400 3.400c-.1.300 0 .6.200.8l1.300 1c-.8 1.600-2.100 2.900-3.700 3.700l-1-1.300c-.2-.2-.5-.3-.8-.2L1 8.300c-.3.100-.5.400-.4.700l.6 2.300c.1.300.3.500.6.500C7 11.800 11.800 7 11.800 1.800c0-.3-.2-.5-.5-.6z" fill="#1474e4"/></svg><div class="ph">216-867-4421</div><svg class="eico" viewBox="0 0 13 10"><rect x="0" y="0" width="13" height="10" rx="1.400" fill="#1480ee"/><path d="M1.200 2.200L6.500 6l5.300-3.800" fill="none" stroke="#fff" stroke-width="1.300"/></svg><div class="em">wendy@deseretserviceplumbing.com</div><div class="d1">May 29 2025</div><div class="d2">05:22 PM <small>(MDT)</small></div><div class="tag">lit living heating/air</div></div>
<div class="row last" style="top:293.700px"><div class="dots"><i style="top:0"></i><i style="top:2.950px"></i><i style="top:5.900px"></i></div><div class="cb"></div><div class="av"><svg viewBox="0 0 50 50" style="width:25.500px;height:25.500px"><rect width="50" height="50" fill="#b4946c"/><g filter="url(#b1)"><rect x="0" y="0" width="50" height="10" fill="#d6be9a"/><rect x="0" y="26" width="10" height="12" fill="#5c402d"/><rect x="42" y="32" width="8" height="4" fill="#2a6ae0"/><rect x="0" y="38" width="12" height="8" fill="#a0642e"/><rect x="38" y="12" width="12" height="18" fill="#c9aa80"/><ellipse cx="25" cy="17" rx="12" ry="13.500" fill="#e0aa8d"/><ellipse cx="25" cy="9" rx="9" ry="5" fill="#e8b99c"/><path d="M13 22Q13 44 25 44.500Q37 44 37 22Q32 29 25 27.500Q18 29 13 22Z" fill="#9c6336"/><path d="M19 19h4M27 19h4" stroke="#5a3a28" stroke-width="1.100"/><path d="M19 28Q25 24.500 31 28Q25 30 19 28Z" fill="#b98a5c"/><ellipse cx="25" cy="30.500" rx="3" ry="1.300" fill="#efe0d2"/><path d="M3 50Q7 41 16 41L25 46L34 41Q43 41 47 50Z" fill="#7c827a"/></g></svg></div><div class="nm">Erik Holmstrom</div><svg class="pico" viewBox="0 0 12 12"><path d="M11.300 1.200L9 .6c-.3-.1-.6.1-.7.400L7.400 3.400c-.1.300 0 .6.200.8l1.300 1c-.8 1.600-2.100 2.900-3.700 3.700l-1-1.300c-.2-.2-.5-.3-.8-.2L1 8.300c-.3.100-.5.400-.4.700l.6 2.300c.1.300.3.500.6.500C7 11.800 11.800 7 11.800 1.800c0-.3-.2-.5-.5-.6z" fill="#1474e4"/></svg><div class="ph">216-555-0193</div><svg class="eico" viewBox="0 0 13 10"><rect x="0" y="0" width="13" height="10" rx="1.400" fill="#1480ee"/><path d="M1.200 2.200L6.500 6l5.300-3.800" fill="none" stroke="#fff" stroke-width="1.300"/></svg><div class="em">erik.h@asgaardindustrial.com</div><div class="d1">May 29 2025</div><div class="d2">05:22 PM <small>(MDT)</small></div><div class="tag">lit living heating/air</div></div>
<div class="row" style="top:323.200px;height:4px"></div>
</div>
<div id="fab"><svg class="abs" style="left:10px;top:10px;width:34px;height:34px" viewBox="0 0 34 34"><circle cx="14" cy="14.600" r="11.500" fill="none" stroke="#fff" stroke-width="3.600"/><path d="M22.600 23.400l9.400 8.200" stroke="#fff" stroke-width="3.800"/></svg></div>
<div class="abs" style="left:0;top:488.600px;width:1045px;height:1.400px;background:#fff"></div>
</body>
</html>
